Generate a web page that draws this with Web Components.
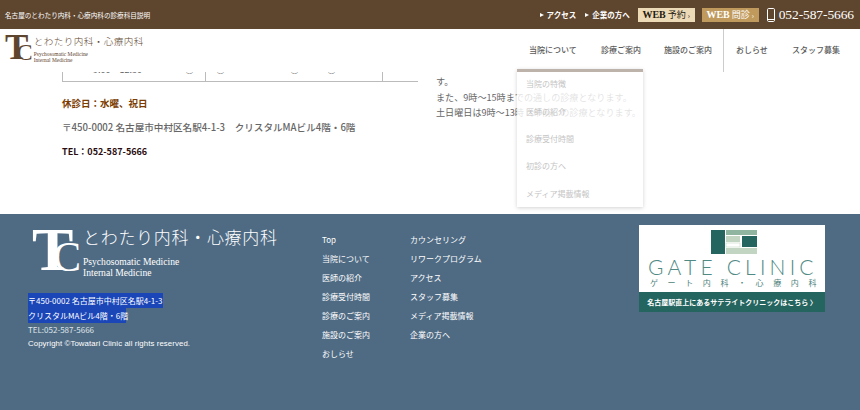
<!DOCTYPE html>
<html lang="ja">
<head>
<meta charset="utf-8">
<style>
  html, body { margin: 0; padding: 0; background: #fff; }
  body { font-family: "Noto Sans CJK JP", "Liberation Sans", sans-serif; width: 860px; height: 410px; overflow: hidden; }
</style>
</head>
<body>
<clinic-page></clinic-page>
<script>
const JP = `"Noto Sans CJK JP", "Liberation Sans", sans-serif`;

// ── Logo ──────────────────────────────────────────────────────────────────────
class TcLogo extends HTMLElement {
  constructor() {
    super();
    const shadow = this.attachShadow({ mode: "open" });
    shadow.innerHTML = `
      <style>
        :host { display: flex; color: var(--logo-color, #fff); --k: var(--logo-scale, 1); }
        .mark { position: relative; width: calc(51px * var(--k)); height: calc(46px * var(--k)); flex: none; font-family: "Liberation Serif", serif; }
        .t, .c { position: absolute; line-height: 1; }
        .t { left: 0; top: calc(-10px * var(--k)); font-size: calc(62px * var(--k)); font-weight: 700; }
        .c { left: calc(21px * var(--k)); top: calc(8px * var(--k)); font-size: calc(42px * var(--k)); }
        .text { display: flex; flex-direction: column; margin-top: calc(-2px * var(--k)); }
        .name { font-family: ${JP}; font-weight: 300; font-size: calc(17px * var(--k)); line-height: calc(22px * var(--k)); letter-spacing: calc(.7px * var(--k)); white-space: nowrap; }
        .sub { font-family: "Liberation Serif", serif; font-size: calc(9.6px * var(--k)); line-height: calc(10.5px * var(--k)); white-space: nowrap; }
        .name + .sub { margin-top: calc(9px * var(--k)); }
      </style>
      <div class="mark"><span class="t">T</span><span class="c">C</span></div>
      <div class="text">
        <div class="name">とわたり内科・心療内科</div>
        <div class="sub">Psychosomatic Medicine</div>
        <div class="sub">Internal Medicine</div>
      </div>`;
  }
}
customElements.define("tc-logo", TcLogo);

// ── Bandeau haut ──────────────────────────────────────────────────────────────
class TopBar extends HTMLElement {
  constructor() {
    super();
    const shadow = this.attachShadow({ mode: "open" });
    shadow.innerHTML = `
      <style>
        :host { display: flex; align-items: center; height: 29px; background: #5e452e; color: #fff; font-family: ${JP}; padding: 0 6px 0 5px; box-sizing: border-box; }
        .tag { font-size: 6.6px; white-space: nowrap; }
        .links { margin-left: auto; display: flex; align-items: center; }
        .link { font-size: 7.5px; font-weight: 700; white-space: nowrap; margin-right: 9px; }
        .link::before { content: ""; display: inline-block; border-left: 4px solid #fff; border-top: 2.5px solid transparent; border-bottom: 2.5px solid transparent; margin-right: 3px; vertical-align: 1px; }
        .btn { width: 57px; height: 14px; display: flex; align-items: center; justify-content: center; gap: 2px; font-size: 9px; color: #231a10; background: #ecd9b6; white-space: nowrap; }
        .btn b { font-family: "Liberation Serif", serif; font-size: 10px; }
        .btn i { font-style: normal; font-size: 7px; }
        .btn.a { margin-left: -1px; }
        .btn.b { background: #c09a5c; color: #fff; margin-left: 7px; }
        .tel { display: flex; align-items: center; margin-left: 8px; font-family: "Liberation Serif", serif; font-size: 13.5px; letter-spacing: -.1px; white-space: nowrap; }
        svg { margin-right: 4px; }
      </style>
      <span class="tag">名古屋のとわたり内科・心療内科の診療科目説明</span>
      <div class="links">
        <span class="link">アクセス</span>
        <span class="link">企業の方へ</span>
        <span class="btn a"><b>WEB</b> 予約 <i>›</i></span>
        <span class="btn b"><b>WEB</b> 問診 <i>›</i></span>
        <span class="tel">
          <svg width="8" height="14" viewBox="0 0 8 14"><rect x=".5" y=".5" width="7" height="13" rx="1.2" fill="none" stroke="#fff"/><path d="M1 11.5h6" stroke="#fff"/></svg>052-587-5666
        </span>
      </div>`;
  }
}
customElements.define("top-bar", TopBar);

// ── En-tête et navigation ─────────────────────────────────────────────────────
class SiteHeader extends HTMLElement {
  constructor() {
    super();
    const shadow = this.attachShadow({ mode: "open" });
    shadow.innerHTML = `
      <style>
        :host { display: flex; justify-content: space-between; height: 43px; background: #fff; position: relative; z-index: 2; box-sizing: border-box; padding-left: 5px; --logo-color: #5e452e; --logo-scale: .565; }
        tc-logo { margin-top: 7px; }
        nav { display: flex; font-family: ${JP}; font-size: 8px; color: #5a5a5a; font-weight: 500; width: 336px; position: relative; }
        nav span { position: absolute; top: 16px; white-space: nowrap; line-height: 10px; }
        .line { position: absolute; left: 199px; top: 0; width: 1px; height: 43px; background: #ccc; }
      </style>
      <tc-logo></tc-logo>
      <nav>
        <span style="left:5px">当院について</span>
        <span style="left:77px">診療ご案内</span>
        <span style="left:140px">施設のご案内</span>
        <span style="left:212px">おしらせ</span>
        <span style="left:268px">スタッフ募集</span>
        <div class="line"></div>
      </nav>`;
  }
}
customElements.define("site-header", SiteHeader);

// ── Menu déroulant ────────────────────────────────────────────────────────────
class NavMenu extends HTMLElement {
  constructor() {
    super();
    const shadow = this.attachShadow({ mode: "open" });
    shadow.innerHTML = `
      <style>
        :host { position: absolute; left: 517px; top: 69px; width: 126px; height: 138px; z-index: 3; box-sizing: border-box; border-top: 3px solid #bdb3aa; background: rgba(255,255,255,.82); box-shadow: 0 1px 4px rgba(0,0,0,.18); font-family: ${JP}; font-size: 8px; color: #c4c4c4; padding-top: 0; }
        div { height: 27.4px; display: flex; align-items: center; padding: 0 0 4px 9px; box-sizing: border-box; }
        div:first-child { border-bottom: 1px solid #f1f1f1; }
      </style>
      <div>当院の特徴</div>
      <div>医師の紹介</div>
      <div>診療受付時間</div>
      <div>初診の方へ</div>
      <div>メディア掲載情報</div>`;
  }
}
customElements.define("nav-menu", NavMenu);

// ── Contenu ───────────────────────────────────────────────────────────────────
class MainContent extends HTMLElement {
  constructor() {
    super();
    const shadow = this.attachShadow({ mode: "open" });
    shadow.innerHTML = `
      <style>
        :host { display: flex; height: 142px; overflow: hidden; font-family: ${JP}; font-size: 9.6px; color: #555; box-sizing: border-box; padding-left: 62px; }
        .left { width: 356px; }
        .row { display: flex; height: 9px; border-bottom: 1px solid #bbb; overflow: hidden; }
        .cell { border-left: 1px solid #bbb; box-sizing: border-box; height: 9px; overflow: hidden; font-size: 9px; line-height: 9px; color: #666; position: relative; }
        .cell span { position: absolute; top: -7px; white-space: nowrap; }
        .closed { margin: 14px 0 0; font-weight: 700; color: #7a3c00; line-height: 14px; font-size: 9.5px; }
        .addr { margin: 10px 0 0; line-height: 14px; font-weight: 500; color: #666; }
        .tel { margin: 11px 0 0; line-height: 14px; font-weight: 700; color: #2a0d10; font-size: 9px; }
        .right { margin: 2px 0 0 18px; line-height: 15.5px; font-size: 9.1px; white-space: nowrap; color: #666; }
      </style>
      <div class="left">
        <div class="row">
          <div class="cell" style="width:143px"><span style="left:30px">9:00～12:30</span><span style="left:122px">○</span></div>
          <div class="cell" style="width:177px"><span style="left:10px">○</span><span style="left:84px">○</span><span style="left:121px">○</span><span style="left:156px">ー</span></div>
          <div class="cell" style="width:36px"></div>
        </div>
        <p class="closed">休診日：水曜、祝日</p>
        <p class="addr">〒450-0002 名古屋市中村区名駅4-1-3　クリスタルMAビル4階・6階</p>
        <p class="tel">TEL：052-587-5666</p>
      </div>
      <div class="right">
        す。<br>また、9時～15時までの通しの診療となります。<br>土日曜日は9時～13時（午前）の診療となります。
      </div>`;
  }
}
customElements.define("main-content", MainContent);

// ── Bannière Gate Clinic ──────────────────────────────────────────────────────
class GateBanner extends HTMLElement {
  constructor() {
    super();
    const shadow = this.attachShadow({ mode: "open" });
    shadow.innerHTML = `
      <style>
        :host { display: flex; flex-direction: column; width: 186px; height: 87px; background: #fff; color: #256560; }
        svg { display: block; margin: 5px 0 0 72px; }
        .name { font-family: "Lato", "Liberation Sans", sans-serif; font-weight: 300; font-size: 21px; line-height: 21px; letter-spacing: 4.2px; margin: 1px 0 0 9px; white-space: nowrap; color: #4f8a84; }
        .kana { font-family: ${JP}; font-size: 8px; line-height: 11px; letter-spacing: 9.6px; margin-left: 11px; white-space: nowrap; color: #4d7f7a; }
        .cta { margin-top: auto; height: 20px; background: #256560; color: #fff; font-family: ${JP}; font-size: 7px; font-weight: 700; display: flex; align-items: center; justify-content: center; white-space: nowrap; }
      </style>
      <svg width="46" height="25" viewBox="0 0 46 25">
        <rect x="0" y="0" width="14" height="24" fill="#256560"/>
        <rect x="15" y="0" width="31" height="5" fill="#8fb5a0"/>
        <rect x="15" y="6" width="14" height="6" fill="#c2d5c2"/>
        <rect x="31" y="6" width="15" height="11" fill="#256560"/>
        <rect x="15" y="13" width="14" height="4" fill="#fff" stroke="#c2d5c2" stroke-width=".6"/>
        <rect x="15" y="18" width="31" height="6" fill="#c2d5c2"/>
      </svg>
      <div class="name">GATE CLINIC</div>
      <div class="kana">ゲート内科・心療内科</div>
      <div class="cta">名古屋駅直上にあるサテライトクリニックはこちら 〉</div>`;
  }
}
customElements.define("gate-banner", GateBanner);

// ── Pied de page ──────────────────────────────────────────────────────────────
class SiteFooter extends HTMLElement {
  constructor() {
    super();
    const shadow = this.attachShadow({ mode: "open" });
    shadow.innerHTML = `
      <style>
        :host { display: flex; height: 196px; background: #4f6b84; color: #fff; font-family: ${JP}; font-size: 8px; box-sizing: border-box; position: relative; }
        .info { width: 322px; padding: 14px 0 0 28px; box-sizing: border-box; flex: none; }
        tc-logo { margin-left: 4px; height: 46px; }
        .addr { margin-top: 19px; line-height: 15px; }
        .addr span { background: #1a46b8; display: inline-block; height: 15px; white-space: nowrap; }
        .addr .l1 { width: 135px; }
        .addr .l2 { width: 98px; }
        .tel { line-height: 14px; color: #dfe5ea; }
        .copy { line-height: 14px; font-family: "Liberation Sans", sans-serif; font-size: 7.8px; letter-spacing: .1px; }
        .menu { display: flex; flex-direction: column; padding-top: 16px; line-height: 19px; white-space: nowrap; }
        .m1 { width: 88px; flex: none; }
        .m2 { width: 229px; flex: none; }
        gate-banner { margin-top: 11px; }
      </style>
      <div class="info">
        <tc-logo></tc-logo>
        <div class="addr">
          <span class="l1">〒450-0002 名古屋市中村区名駅4-1-3</span><br>
          <span class="l2">クリスタルMAビル4階・6階</span>
        </div>
        <div class="tel">TEL:052-587-5666</div>
        <div class="copy">Copyright ©Towatari Clinic all rights reserved.</div>
      </div>
      <div class="menu m1">
        <span>Top</span><span>当院について</span><span>医師の紹介</span><span>診療受付時間</span><span>診療のご案内</span><span>施設のご案内</span><span>おしらせ</span>
      </div>
      <div class="menu m2">
        <span>カウンセリング</span><span>リワークプログラム</span><span>アクセス</span><span>スタッフ募集</span><span>メディア掲載情報</span><span>企業の方へ</span>
      </div>
      <gate-banner></gate-banner>`;
  }
}
customElements.define("site-footer", SiteFooter);

// ── Page ──────────────────────────────────────────────────────────────────────
class ClinicPage extends HTMLElement {
  constructor() {
    super();
    const shadow = this.attachShadow({ mode: "open" });
    shadow.innerHTML = `
      <style>
        :host { display: block; position: relative; width: 860px; height: 410px; overflow: hidden; }
      </style>
      <top-bar></top-bar>
      <site-header></site-header>
      <nav-menu></nav-menu>
      <main-content></main-content>
      <site-footer></site-footer>`;
  }
}
customElements.define("clinic-page", ClinicPage);
</script>
</body>
</html>
